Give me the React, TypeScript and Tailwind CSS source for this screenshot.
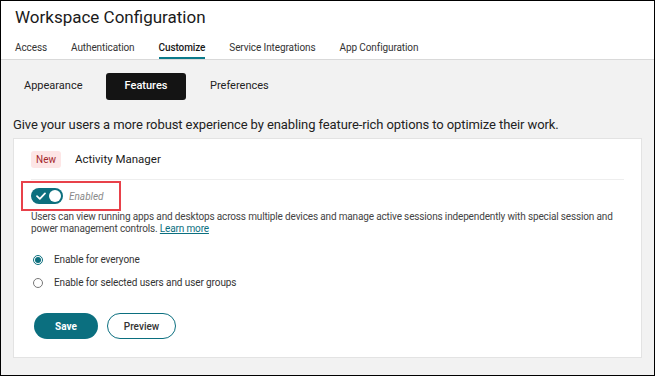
import React from 'react';

const tabs = ['Access', 'Authentication', 'Customize', 'Service Integrations', 'App Configuration'];

export default function App() {
  return (
    <div className="w-[655px] h-[376px] border border-black bg-[#f2f2f2] overflow-hidden text-[#1f1f1f]" style={{ fontFamily: 'Roboto, "Noto Sans", sans-serif' }}>
      {/* header */}
      <div className="bg-white border-b border-[#d9d9d9] px-[14px]">
        <h1 className="text-[17px] leading-[20px] pt-[6px] text-[#1a1a1a]">Workspace Configuration</h1>
        <div className="flex gap-[24px] mt-[15px] text-[10px] leading-[12px] tracking-[-0.1px] text-[#333]">
          {tabs.map((t) => (
            <div
              key={t}
              className={
                t === 'Customize'
                  ? 'pb-[3px] border-b-2 border-[#0b7a8a] font-medium text-[#1a1a1a]'
                  : 'pb-[3px] border-b-2 border-transparent'
              }
            >
              {t}
            </div>
          ))}
        </div>
      </div>

      {/* sub tabs */}
      <div className="flex items-center pt-[13px] text-[11px] text-[#222]">
        <div className="ml-[23px] w-[72px] h-[27px] flex items-center">Appearance</div>
        <div className="ml-[10px] w-[80px] h-[27px] flex items-center justify-center bg-[#141414] text-white rounded-[3px] font-medium">
          Features
        </div>
        <div className="ml-[24px] h-[27px] flex items-center">Preferences</div>
      </div>

      <p className="px-[12px] mt-[17px] text-[13px] leading-[16px] tracking-[-0.1px] text-[#222]">
        Give your users a more robust experience by enabling feature-rich options to optimize their work.
      </p>

      {/* card */}
      <div className="mx-[12px] mt-[5px] bg-white border border-[#e3e3e3] h-[220px] px-[17px]">
        <div className="flex items-center gap-[14px] pt-[12px] pb-[11px] border-b border-[#eeeeee]">
          <span className="bg-[#fde6e6] text-[#a4262c] text-[10px] rounded-[3px] px-[5px] h-[17px] flex items-center">New</span>
          <span className="text-[11.5px] text-[#1a1a1a]">Activity Manager</span>
        </div>

        <div className="ml-[-10px] mt-[1px] w-[100px] h-[30px] border-2 border-[#e8414a] flex items-center pl-[8px] gap-[6px]">
          <div className="w-[32px] h-[16px] rounded-full bg-[#0c6f7e] flex items-center justify-between px-[2px]">
            <svg width="12" height="12" viewBox="0 0 12 12" className="ml-[2px]">
              <path d="M2 6.2 L4.8 8.8 L10 3.4" stroke="white" strokeWidth="1.8" fill="none" strokeLinecap="round" strokeLinejoin="round" />
            </svg>
            <div className="w-[12px] h-[12px] rounded-full bg-white" />
          </div>
          <span className="text-[10px] italic text-[#8a8a8a]">Enabled</span>
        </div>

        <p className="text-[10px] leading-[12px] tracking-[-0.15px] text-[#444]">
          Users can view running apps and desktops across multiple devices and manage active sessions independently with special session and power management controls.{' '}
          <span className="inline-block leading-[12px] text-[#0b6f7f] underline">Learn more</span>
        </p>

        <div className="mt-[19px] flex flex-col gap-[11px] text-[10px] leading-[12px] tracking-[-0.1px] text-[#333] pl-[2px]">
          <label className="flex items-center gap-[11px] h-[12px]">
            <span className="w-[10px] h-[10px] rounded-full border border-[#0c6f7e] flex items-center justify-center">
              <span className="w-[6px] h-[6px] rounded-full bg-[#0c6f7e]" />
            </span>
            Enable for everyone
          </label>
          <label className="flex items-center gap-[11px] h-[12px]">
            <span className="w-[10px] h-[10px] rounded-full border border-[#777]" />
            Enable for selected users and user groups
          </label>
        </div>

        <div className="mt-[24px] flex gap-[9px] pl-[3px]">
          <button className="w-[64px] h-[26px] rounded-full bg-[#0b6f7f] text-white text-[10px] font-bold">Save</button>
          <button className="w-[69px] h-[26px] rounded-full border border-[#0b6f7f] bg-white text-[#333] text-[10px] font-medium">Preview</button>
        </div>
      </div>
    </div>
  );
}
